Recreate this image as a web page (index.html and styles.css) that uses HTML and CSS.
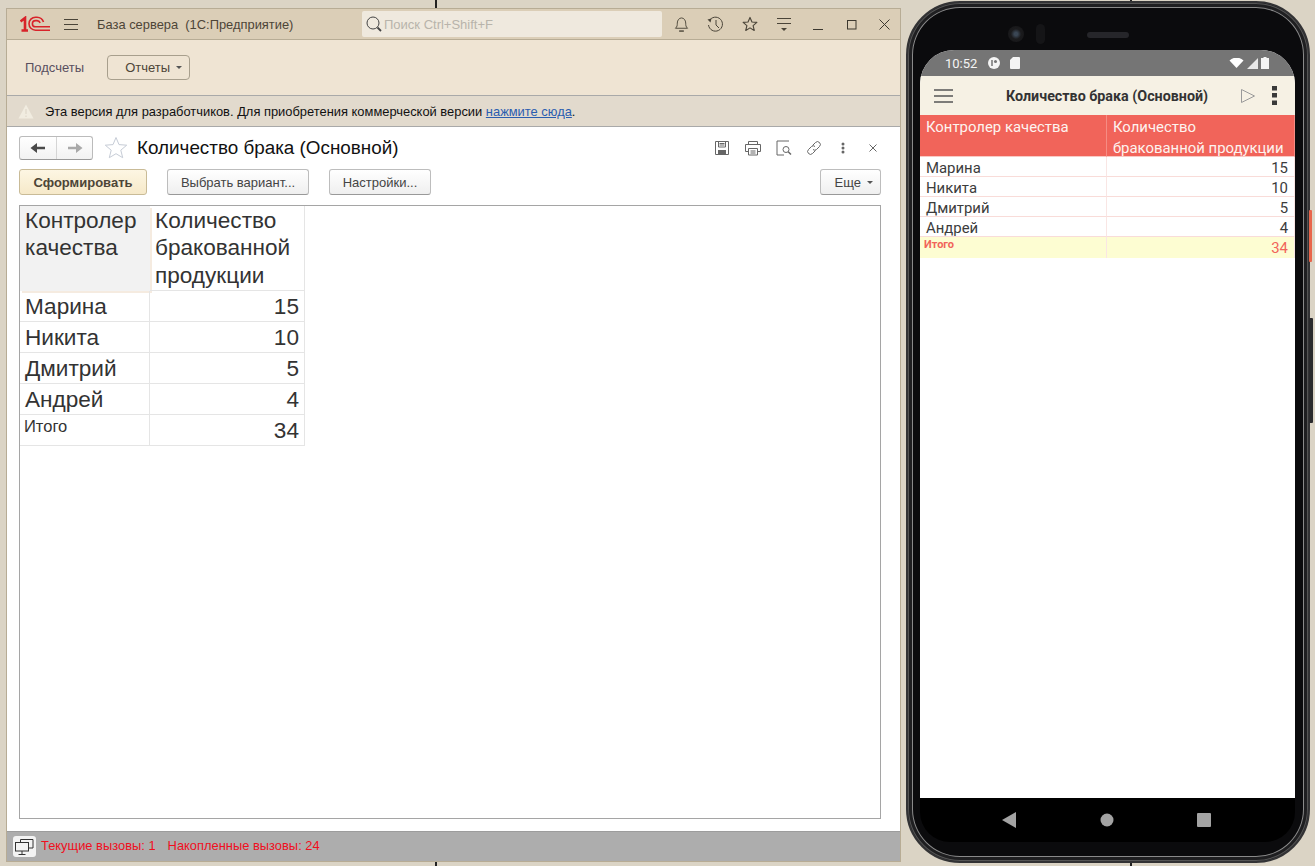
FILE: index.html
```html
<!DOCTYPE html>
<html lang="en">
<head>
  <meta charset="UTF-8">
  <meta name="viewport" content="width=device-width, initial-scale=1.0">
  <title>Количество брака</title>
  <link rel="stylesheet" href="styles.css">
</head>
<body>

  <div class="tick tick-top-a"></div>
  <div class="tick tick-top-b"></div>
  <div class="tick tick-bottom-a"></div>
  <div class="tick tick-bottom-b"></div>

  <div class="window">
    <div class="titlebar">
      <svg class="logo" width="30" height="16" viewBox="0 0 30 16" fill="none" stroke="#d8232a">
        <path d="M0.5 5.5 L5 2 V15.5 M1.5 14.5 H8" stroke-width="2.6"/>
        <path d="M30 14.2 H15.5 A6.3 6.3 0 0 1 15.5 1.2 H17 A7 7 0 0 1 23.5 6" stroke-width="1.6"/>
        <path d="M30 10.8 H15.5 A3 3 0 0 1 15.5 4.6 H17 A4 4 0 0 1 20.2 6.8" stroke-width="1.6"/>
      </svg>
      <svg class="burger" width="16" height="13" viewBox="0 0 16 13" stroke="#4a4438" fill="none">
        <path d="M1 1.5 H15 M1 6.5 H15 M1 11.5 H15"/>
      </svg>
      <span class="app-name">База сервера  (1С:Предприятие)</span>
      <div class="search">
        <svg width="18" height="18" viewBox="0 0 18 18" fill="none" stroke="#444">
          <circle cx="8" cy="8" r="6"/>
          <path d="M12.5 12.5 L16 16" stroke-width="1.8"/>
        </svg>
        <span>Поиск Ctrl+Shift+F</span>
      </div>
      <div class="title-icons">
        <svg width="15" height="17" viewBox="0 0 16 17" fill="none" stroke="#4a4438">
          <path d="M1.5 12.5 C3.5 11 3.5 9 3.5 7 C3.5 4 5.5 1.5 8 1.5 C10.5 1.5 12.5 4 12.5 7 C12.5 9 12.5 11 14.5 12.5 Z" stroke-linejoin="round"/>
          <path d="M5.5 15.5 H10.5" stroke-width="1.5"/>
        </svg>
        <svg width="17" height="17" viewBox="0 0 17 17" fill="none" stroke="#4a4438">
          <path d="M2.2 5 A7 7 0 1 1 1.5 9"/>
          <path d="M0.5 3.5 L4.5 2.5 L3.5 6.5 Z" fill="#4a4438" stroke="none"/>
          <path d="M9 4 V9 L12 12"/>
        </svg>
        <svg width="16" height="16" viewBox="0 0 17 17" fill="none" stroke="#4a4438">
          <path d="M8.5 1.5 L10.6 6.4 L15.8 6.8 L11.8 10.2 L13 15.4 L8.5 12.6 L4 15.4 L5.2 10.2 L1.2 6.8 L6.4 6.4 Z" stroke-linejoin="round" stroke-width="1.2"/>
        </svg>
        <svg width="16" height="15" viewBox="0 0 16 15" fill="none" stroke="#4a4438">
          <path d="M1 1.5 H15 M1 6.5 H15"/>
          <path d="M5 11 H11 L8 14 Z" fill="#4a4438" stroke="none"/>
        </svg>
      </div>
      <div class="window-btns">
        <svg width="11" height="11" viewBox="0 0 11 11" stroke="#3c382f" fill="none"><path d="M0 10.5 H10"/></svg>
        <svg width="11" height="11" viewBox="0 0 11 11" stroke="#3c382f" fill="none"><rect x="1.5" y="1.5" width="8.5" height="8.5"/></svg>
        <svg width="11" height="11" viewBox="0 0 11 11" stroke="#3c382f" fill="none"><path d="M0.5 0.5 L10.5 10.5 M10.5 0.5 L0.5 10.5"/></svg>
      </div>
    </div>

    <div class="sections">
      <span class="section-link">Подсчеты</span>
      <div class="section-btn">Отчеты <i class="caret"></i></div>
    </div>

    <div class="notice">
      <svg width="16" height="15" viewBox="0 0 16 15">
        <path d="M8 0.5 L15.5 14.5 H0.5 Z" fill="#f1ece0"/>
        <path d="M8 5 V10 M8 11.5 V13" stroke="#e2dacd" stroke-width="1.4"/>
      </svg>
      <span>Эта версия для разработчиков. Для приобретения коммерческой версии <a href="#">нажмите сюда</a>.</span>
    </div>

    <div class="content">
      <div class="form-head">
        <div class="nav-btns">
          <span class="nav-back">
            <svg width="16" height="12" viewBox="0 0 16 12" fill="#4a4a4a"><path d="M0.5 6 L7 1 V4.8 H15 V7.2 H7 V11 Z"/></svg>
          </span>
          <span class="nav-next">
            <svg width="16" height="12" viewBox="0 0 16 12" fill="#a9a9a9"><path d="M15.5 6 L9 1 V4.8 H1 V7.2 H9 V11 Z"/></svg>
          </span>
        </div>
        <svg class="form-star" width="24" height="23" viewBox="0 0 24 23" fill="none" stroke="#c6ccd6">
          <path d="M12 1.5 L15 8.6 L22.7 9.2 L16.8 14.2 L18.7 21.7 L12 17.7 L5.3 21.7 L7.2 14.2 L1.3 9.2 L9 8.6 Z" stroke-linejoin="round"/>
        </svg>
        <h1>Количество брака (Основной)</h1>
        <div class="form-icons">
          <svg width="16" height="16" viewBox="0 0 16 16" fill="none" stroke="#666">
            <path d="M1.5 1.5 H14.5 V14.5 H1.5 Z"/>
            <path d="M4.5 1.5 V7 H11.5 V1.5 M5.5 3.5 H10.5 M5.5 5 H10.5"/>
            <rect x="4.5" y="10.5" width="7" height="4" fill="#666"/>
          </svg>
          <svg width="18" height="16" viewBox="0 0 18 16" fill="none" stroke="#666">
            <path d="M4.5 4.5 V1.5 H13.5 V4.5"/>
            <path d="M4 11.5 H1.5 V4.5 H16.5 V11.5 H14"/>
            <path d="M4.5 8.5 H13.5 V15 H4.5 Z M6.5 11 H11.5 M6.5 13 H11.5"/>
          </svg>
          <svg width="16" height="16" viewBox="0 0 16 16" fill="none" stroke="#666">
            <path d="M11 1 H1 V15 H8 M11 1 H13"/>
            <circle cx="10" cy="9.5" r="3"/>
            <path d="M12.2 11.8 L15 14.5" stroke-width="1.5"/>
          </svg>
          <svg width="16" height="16" viewBox="0 0 16 16" fill="none" stroke="#666">
            <path d="M6.5 5.5 L9.5 2.5 A2.6 2.6 0 0 1 13.5 6.5 L10.5 9.5 A2.6 2.6 0 0 1 7 9.5"/>
            <path d="M9.5 10.5 L6.5 13.5 A2.6 2.6 0 0 1 2.5 9.5 L5.5 6.5 A2.6 2.6 0 0 1 9 6.5"/>
          </svg>
          <svg class="form-dots" width="4" height="12" viewBox="0 0 4 12" fill="#666">
            <circle cx="2" cy="2" r="1.5"/><circle cx="2" cy="6" r="1.5"/><circle cx="2" cy="10" r="1.5"/>
          </svg>
          <svg class="form-close" width="8" height="8" viewBox="0 0 8 8" stroke="#666" fill="none">
            <path d="M0.5 0.5 L7.5 7.5 M7.5 0.5 L0.5 7.5"/>
          </svg>
        </div>
      </div>

      <div class="toolbar">
        <button class="btn btn-default">Сформировать</button>
        <button class="btn btn-variant">Выбрать вариант...</button>
        <button class="btn btn-settings">Настройки...</button>
        <button class="btn btn-more">Еще <i class="caret"></i></button>
      </div>

      <div class="report">
        <table class="report-table">
          <thead>
            <tr><th class="corner">Контролер качества</th><th>Количество бракованной продукции</th></tr>
          </thead>
          <tbody>
            <tr><td>Марина</td><td class="num">15</td></tr>
            <tr><td>Никита</td><td class="num">10</td></tr>
            <tr><td>Дмитрий</td><td class="num">5</td></tr>
            <tr><td>Андрей</td><td class="num">4</td></tr>
            <tr class="total"><td>Итого</td><td class="num">34</td></tr>
          </tbody>
        </table>
      </div>
    </div>

    <div class="statusbar">
      <span class="status-btn">
        <svg width="19" height="16" viewBox="0 0 19 16" fill="none" stroke="#333">
          <path d="M5.5 3 V0.5 H18 V9 H14"/>
          <rect x="0.5" y="3.5" width="13" height="8.5" fill="#f3f3f3"/>
          <path d="M7 12 V15 M3.5 15.5 H10.5"/>
        </svg>
      </span>
      <span class="status-text">Текущие вызовы: 1</span>
      <span class="status-text">Накопленные вызовы: 24</span>
    </div>
  </div>

  <div class="phone">
    <span class="side-power"></span>
    <span class="side-volume"></span>
    <div class="phone-top">
      <span class="camera"></span>
      <span class="sensor"></span>
      <span class="speaker"></span>
    </div>
    <div class="screen">
      <div class="android-status">
        <span class="clock">10:52</span>
        <svg width="12" height="12" viewBox="0 0 12 12"><circle cx="6" cy="6" r="6" fill="#f4f4f4"/><path d="M4 3 V9" stroke="#757575" stroke-width="1.5"/><circle cx="7.5" cy="4.5" r="1.5" fill="#757575"/></svg>
        <svg width="10" height="12" viewBox="0 0 10 12"><path d="M3 0 H9 A1 1 0 0 1 10 1 V11 A1 1 0 0 1 9 12 H1 A1 1 0 0 1 0 11 V3 Z" fill="#f4f4f4"/></svg>
        <div class="status-right">
          <svg width="15" height="10" viewBox="0 0 14 10"><path d="M0 2.5 A10 10 0 0 1 14 2.5 L7 10 Z" fill="#fff"/></svg>
          <svg width="11" height="11" viewBox="0 0 12 12"><path d="M12 0 V12 H0 Z" fill="#e8e8e8"/></svg>
          <svg width="8" height="12" viewBox="0 0 8 12"><path d="M2.5 0 H5.5 V1 H8 V12 H0 V1 H2.5 Z" fill="#f4f4f4"/></svg>
        </div>
      </div>
      <div class="appbar">
        <svg width="20" height="14" viewBox="0 0 20 14" stroke="#555" fill="none" stroke-width="1.4"><path d="M1 1 H20 M1 7 H20 M1 13 H20"/></svg>
        <span class="appbar-title">Количество брака (Основной)</span>
        <svg class="play" width="16" height="16" viewBox="0 0 16 16" fill="none" stroke="#9a9a9a"><path d="M1.5 1.5 L14.5 8 L1.5 14.5 Z"/></svg>
        <svg class="dots" width="5" height="19" viewBox="0 0 5 19" fill="#3a3a3a"><rect width="5" height="4.5"/><rect y="7" width="5" height="4.5"/><rect y="14.5" width="5" height="4.5"/></svg>
      </div>
      <table class="mobile-table">
        <thead>
          <tr><th><div>Контролер качества</div></th><th><div>Количество<br>бракованной продукции</div></th></tr>
        </thead>
        <tbody>
          <tr><td>Марина</td><td class="num">15</td></tr>
          <tr><td>Никита</td><td class="num">10</td></tr>
          <tr><td>Дмитрий</td><td class="num">5</td></tr>
          <tr><td>Андрей</td><td class="num">4</td></tr>
          <tr class="total"><td>Итого</td><td class="num">34</td></tr>
        </tbody>
      </table>
    </div>
    <div class="android-nav">
      <svg width="14" height="16" viewBox="0 0 14 16" fill="#a3a3a3"><path d="M14 0 V16 L0 8 Z"/></svg>
      <svg width="14" height="14" viewBox="0 0 14 14" fill="#a3a3a3"><circle cx="7" cy="7" r="6.5"/></svg>
      <svg width="14" height="14" viewBox="0 0 14 14" fill="#a3a3a3"><rect width="14" height="14" rx="1"/></svg>
    </div>
  </div>

</body>
</html>
```

FILE: styles.css
```css
* {
  box-sizing: border-box;
}

html, body {
  height: 100%;
}

body {
  margin: 0;
  position: relative;
  overflow: hidden;
  background-color: #dbd4c5;
  font-family: "Liberation Sans", Arial, sans-serif;
  font-size: 13px;
  color: #333;
}

.tick {
  position: absolute;
  width: 2px;
  height: 8px;
  background-color: #222;
}

.tick-top-a { left: 435px; top: 0; }
.tick-top-b { left: 1130px; top: 0; height: 2px; }
.tick-bottom-a { left: 435px; bottom: 0; height: 4px; }
.tick-bottom-b { left: 1130px; bottom: 0; height: 4px; }

/* desktop window */
.window {
  position: absolute;
  left: 6px;
  top: 8px;
  width: 895px;
  height: 854px;
  display: flex;
  flex-direction: column;
  border: 1px solid #b7ac95;
  background-color: #fff;
}

.titlebar {
  display: flex;
  align-items: center;
  height: 31px;
  flex: none;
  padding-left: 13px;
  background-color: #dbceb7;
  border-bottom: 1px solid #b7ac95;
}

.burger {
  margin-left: 13px;
}

.app-name {
  margin-left: 18px;
  width: 265px;
  font-size: 12.9px;
  white-space: pre;
  color: #4d4537;
}

.search {
  display: flex;
  align-items: center;
  gap: 1px;
  width: 300px;
  height: 26px;
  padding-left: 3px;
  background-color: #efe9de;
  border-radius: 2px;
  color: #b8b4ab;
}

.title-icons {
  display: flex;
  align-items: center;
  gap: 18px;
  margin-left: 12px;
}

.window-btns {
  display: flex;
  align-items: center;
  gap: 22px;
  margin-left: 21px;
}

.sections {
  display: flex;
  align-items: center;
  height: 55px;
  flex: none;
  padding-left: 18px;
  background-color: #efe4d3;
  color: #594f5f;
}

.section-btn {
  display: flex;
  align-items: center;
  justify-content: flex-end;
  gap: 6px;
  width: 83px;
  height: 25px;
  margin-left: 23px;
  padding-right: 7px;
  border: 1px solid #a89f8d;
  border-radius: 4px;
  color: #4d4537;
}

.caret {
  display: inline-block;
  width: 0;
  height: 0;
  border-left: 3px solid transparent;
  border-right: 3px solid transparent;
  border-top: 3px solid #555;
}

.notice {
  display: flex;
  align-items: center;
  gap: 11px;
  height: 32px;
  flex: none;
  padding-left: 11px;
  background-color: #e2dacd;
  border-top: 1px solid #a9a9a9;
  border-bottom: 1px solid #a9a9a9;
  font-size: 12.9px;
  color: #111;
}

.notice a {
  color: #2a5db0;
}

.content {
  flex: 1;
  display: flex;
  flex-direction: column;
  padding: 8px 19px 12px 12px;
  min-height: 0;
}

.form-head {
  display: flex;
  align-items: center;
  height: 25px;
  flex: none;
}

.nav-btns {
  display: flex;
  width: 74px;
  height: 24px;
  border: 1px solid #bbb;
  border-bottom-color: #999;
  border-radius: 3px;
  background: linear-gradient(#fff, #f2f2f2);
}

.nav-back, .nav-next {
  display: flex;
  align-items: center;
  justify-content: center;
  flex: 1;
}

.nav-back {
  flex: none;
  width: 37px;
  border-right: 1px solid #d5d5d5;
}

.form-star {
  margin-left: 11px;
}

h1 {
  margin: 1px 0 0 9px;
  font-size: 18.85px;
  font-weight: normal;
  color: #111;
}

.form-icons {
  display: flex;
  align-items: center;
  gap: 14px;
  margin-left: auto;
  margin-right: 4px;
}

.form-dots {
  margin-left: 5px;
}

.form-close {
  margin-left: 10px;
}

.toolbar {
  display: flex;
  align-items: center;
  gap: 20px;
  height: 26px;
  margin-top: 9px;
  flex: none;
}

.btn {
  height: 26px;
  padding: 0;
  border: 1px solid #bdbdbd;
  border-bottom-color: #999;
  border-radius: 3px;
  background: linear-gradient(#fff, #efefef);
  font-family: inherit;
  font-size: 13px;
  color: #444;
}

.btn-default {
  width: 128px;
  border-color: #c9bb97;
  background: linear-gradient(#fdf6e3, #f6e9c9);
  font-weight: bold;
  color: #4d4537;
}

.btn-variant { width: 142px; }
.btn-settings { width: 102px; }

.btn-more {
  display: flex;
  align-items: center;
  justify-content: flex-end;
  gap: 6px;
  width: 61px;
  margin-left: auto;
  padding-right: 7px;
}

.report {
  flex: 1;
  margin-top: 10px;
  border: 1px solid #a5a5a5;
  min-height: 0;
}

.report-table {
  border-collapse: separate;
  border-spacing: 0;
  table-layout: fixed;
  width: 285px;
  font-size: 22.6px;
  line-height: 27.4px;
  color: #333;
}

.report-table th, .report-table td {
  border-right: 1px solid #e5e5e5;
  border-bottom: 1px solid #e5e5e5;
  padding: 0 5px;
  font-weight: normal;
  text-align: left;
  height: 31px;
}

.report-table td {
  padding-top: 2px;
  line-height: 28px;
}

.report-table th {
  height: 85px;
  padding-top: 1px;
  vertical-align: top;
}

.report-table th:first-child, .report-table td:first-child {
  width: 130px;
}

.report-table .corner {
  background-color: #f2f2f2;
  border: none;
  box-shadow: 2px 2px 0 #f5ebe0;
}

.report-table td.num {
  text-align: right;
}

.report-table .total td:first-child {
  padding: 0 4px;
  vertical-align: top;
  font-size: 16.5px;
  line-height: 22px;
}

.statusbar {
  display: flex;
  align-items: center;
  gap: 12px;
  height: 30px;
  flex: none;
  padding-left: 6px;
  background-color: #adadad;
  border-top: 1px solid #9c9c9c;
  font-size: 12.9px;
  color: #f00f1e;
}

.status-btn {
  display: flex;
  align-items: center;
  justify-content: center;
  width: 23px;
  height: 21px;
  margin-right: -7px;
  border-radius: 3px;
  background-color: #f3f3f3;
}

.status-text {
  margin-bottom: 3px;
}

/* phone */
.phone {
  position: absolute;
  left: 906px;
  top: 1px;
  width: 404px;
  height: 862px;
  display: flex;
  flex-direction: column;
  padding: 0 13px 0 12px;
  border: 2px solid #333335;
  border-radius: 54px;
  background-color: #0b0b0d;
  box-shadow: inset 0 0 0 1px #555, inset 0 0 0 4px #1f1f21, inset 0 0 0 5px #8a8a8a;
}

.side-power {
  position: absolute;
  right: -4px;
  top: 207px;
  width: 3px;
  height: 52px;
  border-radius: 1px;
  background-color: #e8654b;
}

.side-volume {
  position: absolute;
  right: -5px;
  top: 315px;
  width: 4px;
  height: 105px;
  border-radius: 1px;
  background-color: #2b2b2d;
}

.phone-top {
  position: relative;
  height: 47px;
  flex: none;
}

.camera {
  position: absolute;
  left: 88px;
  top: 23px;
  width: 16px;
  height: 16px;
  border-radius: 50%;
  background: radial-gradient(#3a4654 15%, #1b1b1d 45%, #151517);
}

.sensor {
  position: absolute;
  left: 116px;
  top: 21px;
  width: 9px;
  height: 20px;
  border-radius: 5px;
  background-color: #151517;
}

.speaker {
  position: absolute;
  left: 167px;
  top: 29px;
  width: 42px;
  height: 6px;
  border-radius: 3px;
  background-color: #26262a;
}

.screen {
  flex: none;
  height: 748px;
  border-radius: 34px 34px 0 0;
  overflow: hidden;
  background-color: #fff;
}

.android-status {
  display: flex;
  align-items: center;
  gap: 10px;
  height: 26px;
  padding: 0 26px 0 25px;
  background-color: #757575;
  color: #f4f4f4;
  font-family: Roboto, sans-serif;
  font-size: 13px;
}

.android-status .clock {
  margin-right: 1px;
}

.status-right {
  display: flex;
  align-items: center;
  gap: 3px;
  margin-left: auto;
}

.appbar {
  display: flex;
  align-items: center;
  height: 39px;
  padding-left: 13px;
  background-color: #f6f1e4;
}

.appbar-title {
  margin-left: 53px;
  font-family: Roboto, sans-serif;
  font-size: 14.3px;
  font-weight: bold;
  color: #333;
}

.play {
  margin-left: 32px;
}

.dots {
  margin-left: 16px;
}

.mobile-table {
  border-collapse: separate;
  border-spacing: 0;
  table-layout: fixed;
  width: 100%;
  font-family: Roboto, sans-serif;
  font-size: 14.9px;
  color: #3c3c3c;
}

.mobile-table th, .mobile-table td {
  padding: 0 6px;
  font-weight: normal;
  text-align: left;
  vertical-align: top;
}

.mobile-table th:first-child, .mobile-table td:first-child {
  width: 187px;
}

.mobile-table th {
  height: 42px;
  background-color: #f1645a;
  border-right: 1px solid #f58c84;
  border-bottom: 1px solid #f9c9c4;
  color: #fdf3ef;
  line-height: 21px;
}

.mobile-table th div {
  margin: 2px 0 -3px;
}

.mobile-table td {
  height: 20px;
  padding-top: 3px;
  line-height: 16px;
  border-bottom: 1px solid #f9dcd9;
  border-right: 1px solid #f9e6e4;
}

.mobile-table td.num {
  text-align: right;
}

.mobile-table .total td {
  height: 21px;
  background-color: #fdfdd2;
  border-bottom: none;
  color: #f1645a;
}

.mobile-table .total td:first-child {
  padding: 1px 0 0 4px;
  font-size: 11px;
  font-weight: bold;
  line-height: 14px;
}

.android-nav {
  display: flex;
  align-items: center;
  justify-content: space-between;
  height: 44px;
  flex: none;
  padding: 0 84px 0 82px;
  border-radius: 0 0 30px 30px;
  background-color: #000;
}
```
